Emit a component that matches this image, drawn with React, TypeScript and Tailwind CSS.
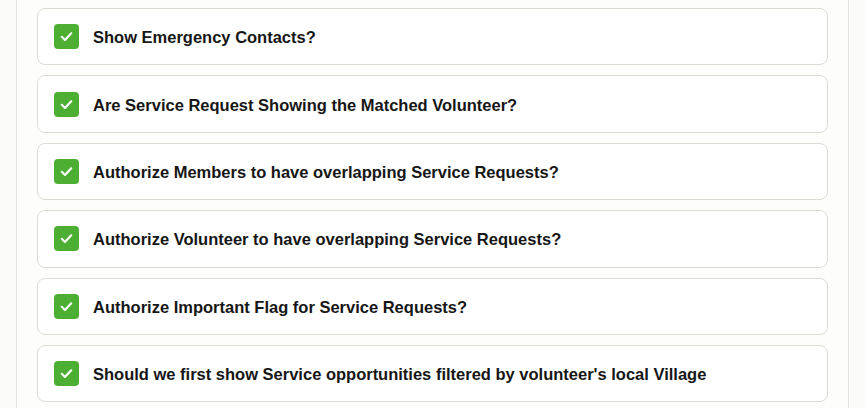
import React from "react";

const settings = [
  "Show Emergency Contacts?",
  "Are Service Request Showing the Matched Volunteer?",
  "Authorize Members to have overlapping Service Requests?",
  "Authorize Volunteer to have overlapping Service Requests?",
  "Authorize Important Flag for Service Requests?",
  "Should we first show Service opportunities filtered by volunteer's local Village",
];

function CheckBox() {
  return (
    <span className="flex h-[25px] w-[25px] shrink-0 items-center justify-center rounded-[4px] bg-[#4caf33]">
      <svg width="15" height="15" viewBox="0 0 14 14" fill="none">
        <path d="M2.6 7.3 L5.6 10.2 L11.4 4" stroke="white" strokeWidth="2" strokeLinecap="round" strokeLinejoin="round" />
      </svg>
    </span>
  );
}

export default function App() {
  return (
    <div className="min-h-[408px] w-[865px] bg-[#fbfbfa] pl-4 pr-4" style={{ fontFamily: '"Liberation Sans", Arial, sans-serif' }}>
      <div className="flex min-h-[408px] flex-col gap-[10px] border-x border-[#e6e6e1] bg-[#fdfdfc] px-5 pt-2 pb-4">
        {settings.map((label) => (
          <div key={label} className="flex h-[57.4px] items-center gap-[14px] rounded-lg border border-[#dcdcd4] bg-white pl-[16px] pr-4">
            <CheckBox />
            <span className="pt-[2px] text-[16.5px] font-bold text-[#161616]">{label}</span>
          </div>
        ))}
      </div>
    </div>
  );
}
